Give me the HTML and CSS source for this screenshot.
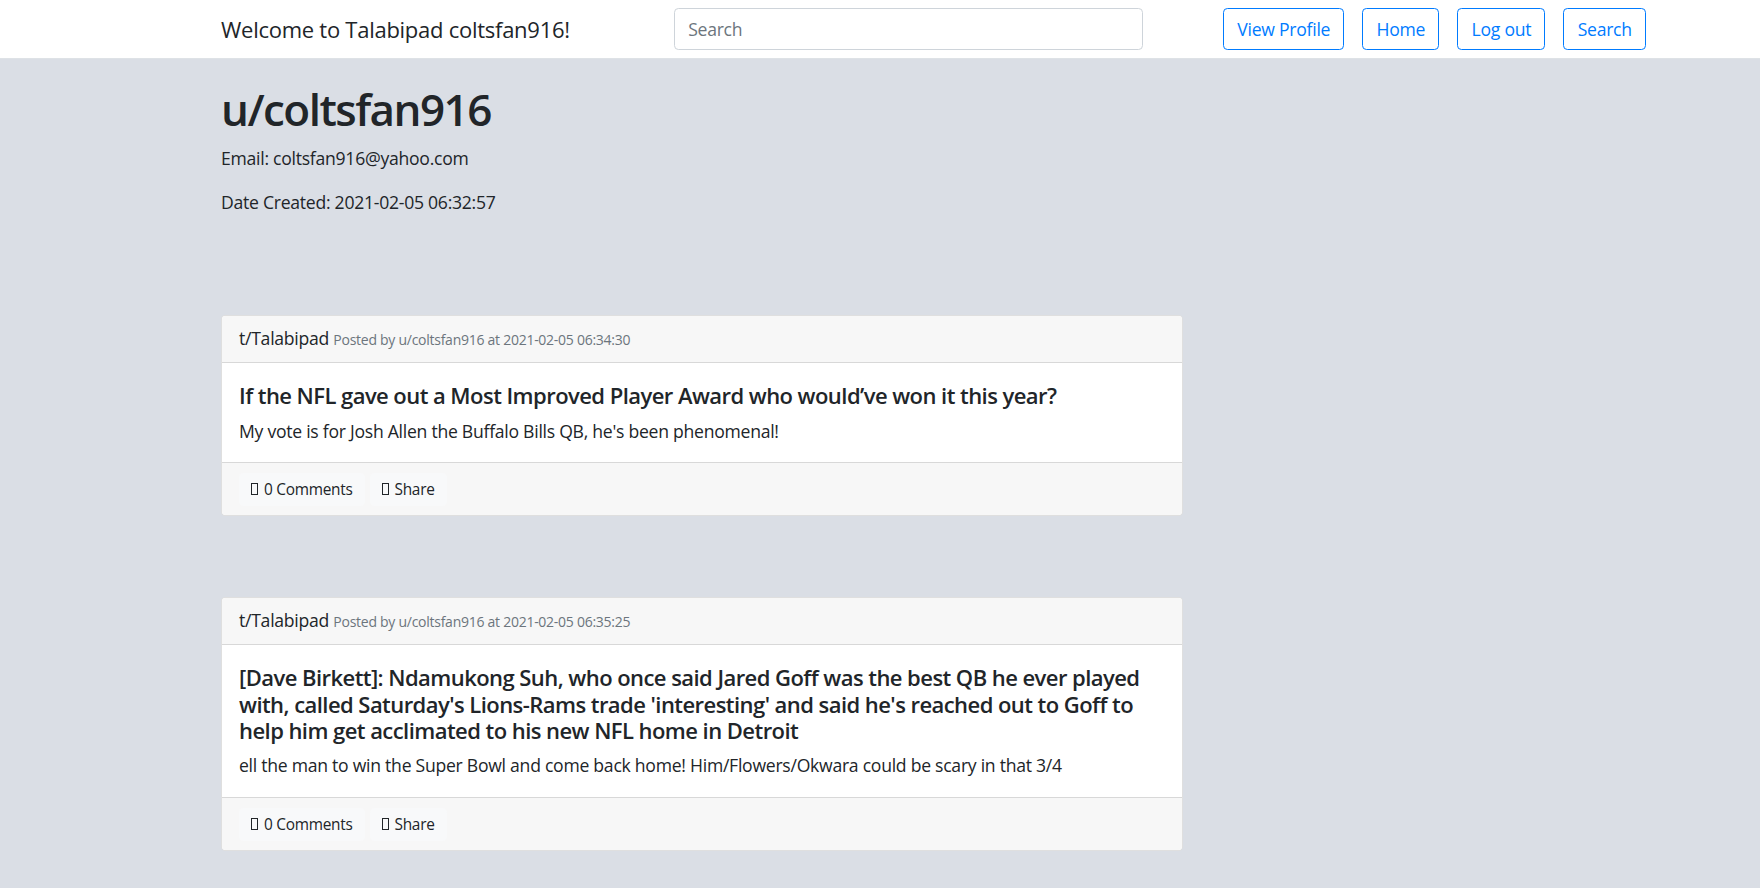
FILE: index.html
```html
<!DOCTYPE html>
<html lang="en">
<head>
<meta charset="utf-8">
<title>Talabipad - u/coltsfan916</title>
<link rel="stylesheet" href="styles.css">
</head>
<body>
<nav class="navbar">
  <div class="brand">Welcome to Talabipad coltsfan916!</div>
  <input class="search-input" type="text" placeholder="Search">
  <div class="nav-buttons">
    <button class="btn-outline">View Profile</button>
    <button class="btn-outline">Home</button>
    <button class="btn-outline">Log out</button>
    <button class="btn-outline">Search</button>
  </div>
</nav>
<main class="main">
  <h1 class="username">u/coltsfan916</h1>
  <p class="info">Email: coltsfan916@yahoo.com</p>
  <p class="info">Date Created: 2021-02-05 06:32:57</p>

  <div class="posts">
    <div class="card">
      <div class="card-header">t/Talabipad <small class="muted">Posted by u/coltsfan916 at 2021-02-05 06:34:30</small></div>
      <div class="card-body">
        <h5 class="card-title">If the NFL gave out a Most Improved Player Award who would’ve won it this year?</h5>
        <p class="card-text">My vote is for Josh Allen the Buffalo Bills QB, he's been phenomenal!</p>
      </div>
      <div class="card-footer">
        <span class="footer-btn"><span class="tofu"></span>0 Comments</span>
        <span class="footer-btn"><span class="tofu"></span>Share</span>
      </div>
    </div>

    <div class="card">
      <div class="card-header">t/Talabipad <small class="muted">Posted by u/coltsfan916 at 2021-02-05 06:35:25</small></div>
      <div class="card-body">
        <h5 class="card-title">[Dave Birkett]: Ndamukong Suh, who once said Jared Goff was the best QB he ever played with, called Saturday's Lions-Rams trade 'interesting' and said he's reached out to Goff to help him get acclimated to his new NFL home in Detroit</h5>
        <p class="card-text">ell the man to win the Super Bowl and come back home! Him/Flowers/Okwara could be scary in that 3/4</p>
      </div>
      <div class="card-footer">
        <span class="footer-btn"><span class="tofu"></span>0 Comments</span>
        <span class="footer-btn"><span class="tofu"></span>Share</span>
      </div>
    </div>
  </div>
</main>
</body>
</html>
```
FILE: styles.css
```css
* { box-sizing: border-box; }
html, body { margin: 0; padding: 0; }
body {
  font-family: "Open Sans", "Noto Sans", sans-serif;
  font-size: 17.6px;
  line-height: 1.5;
  letter-spacing: -0.015em;
  color: #212529;
  background: #dadee5;
  min-height: 888px;
}
.navbar {
  display: flex;
  align-items: center;
  height: 59px;
  background: #fff;
  border-bottom: 1px solid #dee2e6;
  padding: 0 114px 0 221px;
}
.brand {
  flex: 0 0 453px;
  font-size: 22px;
  line-height: 1.5;
  color: #212529;
}
.search-input {
  width: 469px;
  height: 42px;
  padding: 6.6px 13.2px;
  font-family: inherit;
  font-size: 17.6px;
  letter-spacing: inherit;
  color: #495057;
  border: 1px solid #ced4da;
  border-radius: 4.4px;
  background: #fff;
  outline: none;
}
.search-input::placeholder { color: #6c757d; }
.nav-buttons {
  margin-left: auto;
  display: flex;
  gap: 18px;
}
.btn-outline {
  height: 42px;
  padding: 6.6px 13.2px;
  font-family: inherit;
  font-size: 17.6px;
  letter-spacing: inherit;
  line-height: 1.5;
  color: #007bff;
  background: transparent;
  border: 1px solid #007bff;
  border-radius: 4.4px;
}
.main {
  padding: 24px 0 40px 221px;
}
.username {
  margin: 0 0 8.8px;
  font-size: 44px;
  font-weight: 600;
  line-height: 1.2;
  letter-spacing: -0.035em;
}
.info {
  margin: 0 0 17.6px;
}
.posts {
  display: flex;
  flex-direction: column;
  gap: 81px;
  margin-top: 100px;
  width: 962px;
}
.card {
  background: #fff;
  border: 1px solid rgba(0,0,0,.125);
  border-radius: 4.4px;
  overflow: hidden;
}
.card-header {
  background: #f7f7f7;
  border-bottom: 1px solid rgba(0,0,0,.125);
  padding: 9px 17px 9px 17px;
  line-height: 26.4px;
}
.muted {
  font-size: 14px;
  color: #6c757d;
}
.card-body {
  padding: 19px 17px 18px;
}
.card-title {
  margin: 0 0 8.8px;
  font-size: 22px;
  font-weight: 600;
  line-height: 1.2;
  letter-spacing: -0.025em;
}
.card-text {
  margin: 0;
}
.card-footer {
  background: #f7f7f7;
  border-top: 1px solid rgba(0,0,0,.125);
  padding: 10px 17px 9px;
  display: flex;
  gap: 5px;
}
.footer-btn {
  display: inline-flex;
  align-items: center;
  gap: 6px;
  height: 33px;
  padding: 0 12px;
  font-size: 15.4px;
  background: #f8f9fa;
  border-radius: 4.4px;
}
.tofu {
  display: inline-block;
  width: 7px;
  height: 12px;
  border: 1px solid #212529;
}
```
